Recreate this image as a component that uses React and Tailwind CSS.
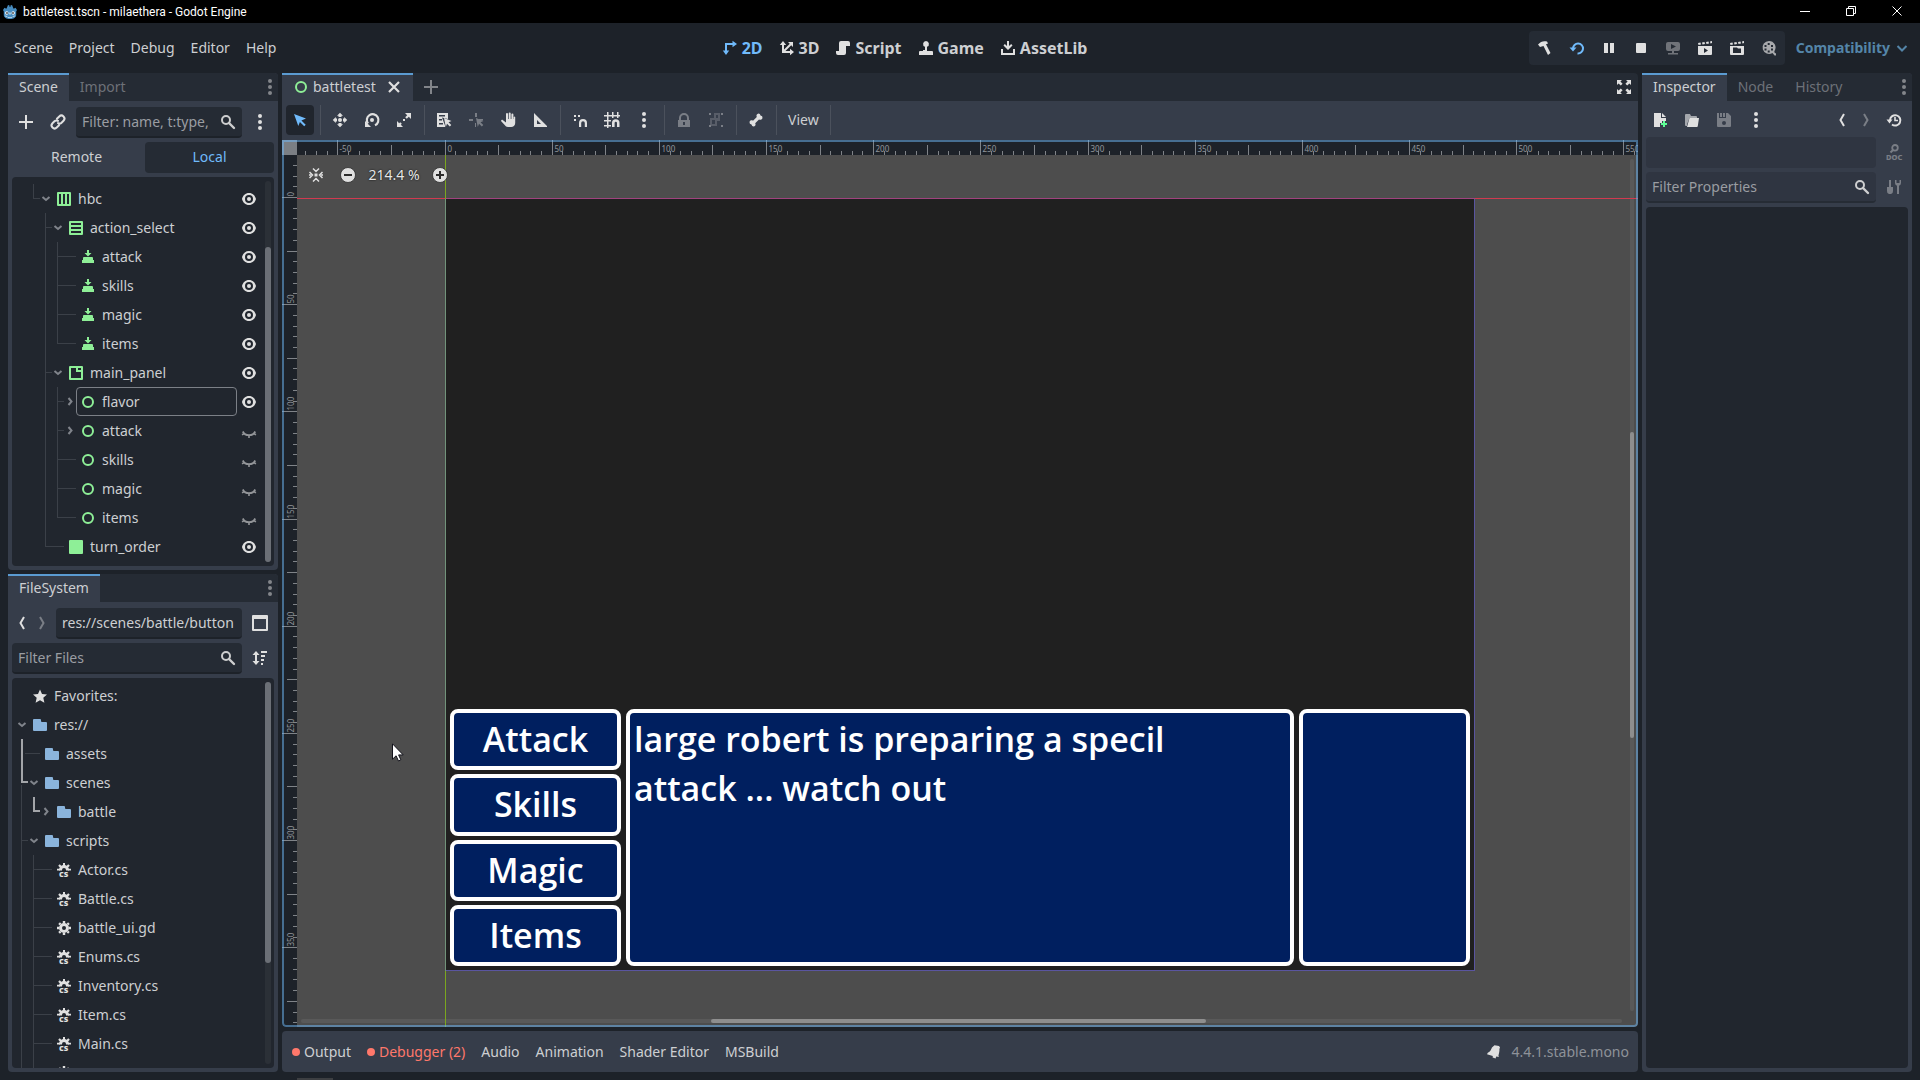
import { clsx } from 'clsx'

const ZOOM = 2.1435

/* ---------- icons, 16x16 grid ---------- */

const Ico = ({ children, className }) => (
    <svg viewBox="0 0 16 16" className={clsx('w-4 h-4 shrink-0 overflow-visible fill-[#e0e0e0]', className)} aria-hidden="true">
        {children}
    </svg>
)

const Stroke = ({ d, w = 2, color = '#e0e0e0', ...rest }) => (
    <path d={d} fill="none" stroke={color} strokeWidth={w} {...rest} />
)

const DotsIcon = ({ className }) => (
    <Ico className={className}>
        <circle cx="8" cy="2" r="2" /><circle cx="8" cy="8" r="2" /><circle cx="8" cy="14" r="2" />
    </Ico>
)
const SearchIcon = ({ className }) => (
    <Ico className={className}>
        <circle cx="6" cy="6" r="4" fill="none" stroke="#e0e0e0" strokeWidth="2" />
        <Stroke d="M9 9l5 5" w={2.4} strokeLinecap="round" />
    </Ico>
)
const PlusIcon = ({ className }) => <Ico className={className}><path d="M7 1h2v6h6v2H9v6H7V9H1V7h6z" /></Ico>
const CloseIcon = () => <Ico><Stroke d="M3 3l10 10M13 3L3 13" w={2.2} /></Ico>
const LinkIcon = () => (
    <Ico>
        <g transform="rotate(-45 8 8)" fill="none" stroke="#e0e0e0" strokeWidth="2" strokeLinecap="round">
            <path d="M6.500 11H3.200a3 3 0 0 1 0-6H6a3 3 0 0 1 2.800 2.200M9.500 5h3.300a3 3 0 0 1 0 6H10a3 3 0 0 1-2.800-2.200" />
        </g>
    </Ico>
)
const BackIcon = () => <Ico><Stroke d="M10 2L6.500 8l3.500 6" w={2} /></Ico>
const ForwardIcon = () => <Ico className="opacity-40"><Stroke d="M6 2l3.500 6L6 14" w={2} /></Ico>

const EyeIcon = () => (
    <Ico>
        <path fillRule="evenodd" d="M8 2C4.400 2 1.800 4.600 1 8c.8 3.400 3.400 6 7 6s6.200-2.600 7-6c-.8-3.400-3.400-6-7-6zm0 2a4 4 0 1 1 0 8 4 4 0 0 1 0-8z" />
        <circle cx="8" cy="8" r="2" />
    </Ico>
)
const ClosedEyeIcon = () => (
    <Ico className="opacity-60">
        <Stroke d="M1.800 8.500C3 11 5.200 12.200 8 12.200s5-1.200 6.200-3.700" w={1.800} />
        <Stroke d="M1 11.800l2.300-1.200M15 11.800l-2.300-1.200M8 12v3" w={1.600} />
    </Ico>
)

const GREEN = '#8eef97'
const nodeIcons = {
    hbox: <path fill={GREEN} fillRule="evenodd" d="M2 1h12a1 1 0 0 1 1 1v12a1 1 0 0 1-1 1H2a1 1 0 0 1-1-1V2a1 1 0 0 1 1-1zm1 2v10h2V3zm4 0v10h2V3zm4 0v10h2V3z" />,
    vbox: <path fill={GREEN} fillRule="evenodd" d="M2 1h12a1 1 0 0 1 1 1v12a1 1 0 0 1-1 1H2a1 1 0 0 1-1-1V2a1 1 0 0 1 1-1zm1 2v2h10V3zm0 4v2h10V7zm0 4v2h10v-2z" />,
    button: <path fill={GREEN} d="M7 1h2v3h2.500L8 7.500 4.500 4H7zM4 8h8a1 1 0 0 1 1 1v2H3V9a1 1 0 0 1 1-1zm-2 3h12v3H2z" />,
    panel: <path fill={GREEN} fillRule="evenodd" d="M2 1h12a1 1 0 0 1 1 1v12a1 1 0 0 1-1 1H2a1 1 0 0 1-1-1V2a1 1 0 0 1 1-1zm1 2v10h10V7H8V3zm7 0v2h3V3z" />,
    control: <circle cx="8" cy="8" r="5" fill="none" stroke={GREEN} strokeWidth="2" />,
    rect: <rect x="1" y="1" width="14" height="14" rx="1" fill={GREEN} />,
    folder: <path fill="#8ab4dc" d="M2 2a1 1 0 0 0-1 1v10a1 1 0 0 0 1 1h12a1 1 0 0 0 1-1V6a1 1 0 0 0-1-1h-4a1 1 0 0 1-1-1V3a1 1 0 0 0-1-1z" />,
    star: <path d="M8 1.500l2 4.500 5 .5-3.700 3.300 1.100 5L8 12.300l-4.400 2.500 1.100-5L1 6.500 6 6z" />,
    gear: (
        <>
            <circle cx="8" cy="8" r="3.500" fill="none" stroke="#e0e0e0" strokeWidth="3" />
            <Stroke d="M8 1v2M8 13v2M1 8h2M13 8h2M3.100 3.100l1.400 1.400M11.500 11.500l1.400 1.400M3.100 12.900l1.400-1.400M11.500 4.500l1.400-1.400" w={2.400} />
        </>
    ),
    cs: (
        <>
            <path d="M3 8.500V8a5 5 0 0 1 10 0v.5h-3V8a2 2 0 0 0-4 0v.5z" />
            <path d="M7 1h2v3H7zM1 6.800h3v1.700H1zM12 6.800h3v1.700h-3zM2.200 3.800l1.600-1.600L6 4.400 4.400 6zM13.800 3.800l-1.600-1.600L10 4.400 11.600 6z" />
            <text x="3" y="15" fontSize="9" fontWeight="800" fontFamily="Noto Sans, sans-serif">cs</text>
        </>
    ),
}

/* ---------- trees ---------- */

// one 12px cell of the relationship lines in front of a row
const cellPaths = {
    '|': 'M5.500 0V29',
    t: 'M5.500 0V29M5 14.500H12',
    l: 'M5.500 0V14.500M5 14.500H12',
    '-': 'M0 14.500H12',
}
function Cell({ kind }) {
    if (kind === 'v' || kind === '>') {
        return (
            <svg viewBox="0 0 12 29" className="w-3 h-[29px] shrink-0" aria-hidden="true">
                <path d={kind === 'v' ? 'M2.500 13l3.500 3 3.500-3' : 'M4.500 11l3 3.500-3 3.500'} fill="none" stroke="#80848b" strokeWidth="2" />
            </svg>
        )
    }
    return (
        <svg viewBox="0 0 12 29" className="w-3 h-[29px] shrink-0" shapeRendering="crispEdges" aria-hidden="true">
            {cellPaths[kind] && <path d={cellPaths[kind]} fill="none" stroke="#3b4048" />}
            {kind === 'T' && <path d="M6 0V29" fill="none" stroke="#a3a5a9" strokeWidth="2" />}
            {kind === 'T' && <path d="M9 14.500h3" fill="none" stroke="#3b4048" />}
            {kind === 'L' && <path d="M6 0V14h6" fill="none" stroke="#a3a5a9" strokeWidth="2" />}
            {kind === 'M' && <path d="M6 0V14h6" fill="none" stroke="#a3a5a9" strokeWidth="2" />}
            {kind === 'M' && <path d="M5.500 17V29" fill="none" stroke="#3b4048" />}
        </svg>
    )
}

const sceneRows = [
    { cells: ' lv', icon: 'hbox', name: 'hbc', eye: true },
    { cells: '  tv', icon: 'vbox', name: 'action_select', eye: true },
    { cells: '  |t-', icon: 'button', name: 'attack', eye: true },
    { cells: '  |t-', icon: 'button', name: 'skills', eye: true },
    { cells: '  |t-', icon: 'button', name: 'magic', eye: true },
    { cells: '  |l-', icon: 'button', name: 'items', eye: true },
    { cells: '  tv', icon: 'panel', name: 'main_panel', eye: true },
    { cells: '  |t>', icon: 'control', name: 'flavor', eye: true, focused: true },
    { cells: '  |t>', icon: 'control', name: 'attack', eye: false },
    { cells: '  |t-', icon: 'control', name: 'skills', eye: false },
    { cells: '  |t-', icon: 'control', name: 'magic', eye: false },
    { cells: '  |l-', icon: 'control', name: 'items', eye: false },
    { cells: '  l-', icon: 'rect', name: 'turn_order', eye: true },
]

const fileRows = [
    { cells: ' ', icon: 'star', name: 'Favorites:' },
    { cells: 'v', icon: 'folder', name: 'res://' },
    { cells: 'T-', icon: 'folder', name: 'assets' },
    { cells: 'Mv', icon: 'folder', name: 'scenes' },
    { cells: '|L>', icon: 'folder', name: 'battle' },
    { cells: 'tv', icon: 'folder', name: 'scripts' },
    { cells: '|t-', icon: 'cs', name: 'Actor.cs' },
    { cells: '|t-', icon: 'cs', name: 'Battle.cs' },
    { cells: '|t-', icon: 'gear', name: 'battle_ui.gd' },
    { cells: '|t-', icon: 'cs', name: 'Enums.cs' },
    { cells: '|t-', icon: 'cs', name: 'Inventory.cs' },
    { cells: '|t-', icon: 'cs', name: 'Item.cs' },
    { cells: '|t-', icon: 'cs', name: 'Main.cs' },
    { cells: '|t-', icon: 'gear', name: '' },
]

function TreeRow({ cells, icon, name, eye, focused }) {
    return (
        <li className="flex items-center h-[29px] shrink-0">
            {cells.split('').map((kind, i) => <Cell key={i} kind={kind} />)}
            <div className={clsx('flex-1 h-full flex items-center gap-1.5 pl-1 rounded-sm', focused && 'outline outline-1 -outline-offset-1 outline-[#7c8087]')}>
                <Ico>{nodeIcons[icon]}</Ico>
                <span>{name}</span>
            </div>
            {eye !== undefined && (
                <button className="ml-1" aria-label={`Toggle visibility of ${name}`}>
                    {eye ? <EyeIcon /> : <ClosedEyeIcon />}
                </button>
            )}
        </li>
    )
}

function Tree({ rows, className, thumb }) {
    return (
        <div className="flex-1 min-h-0 flex bg-[#21262e] rounded-sm overflow-hidden pl-1 pr-[3px]">
            <ul className={clsx('flex-1 min-h-0 overflow-hidden', className)}>
                {rows.map((row, i) => <TreeRow key={i} {...row} />)}
            </ul>
            <div className="w-1.5 ml-2 my-1 rounded-full bg-[#2b3037] flex flex-col">
                <div className={clsx('rounded-full bg-[#6b6f76]', thumb)} />
            </div>
        </div>
    )
}

/* ---------- docks ---------- */

const activeTab = 'bg-[#363d4a] shadow-[inset_0_2px_#5b9bd1] text-[#cdcfd2]'

function DockTabs({ tabs }) {
    return (
        <div className="h-7 shrink-0 flex bg-[#252b34] rounded-t-sm text-[#6d7178]">
            {tabs.map((tab, i) => (
                <button key={tab} className={clsx('px-[11px]', i === 0 && activeTab)}>{tab}</button>
            ))}
            <button className="ml-auto" aria-label="Dock options"><DotsIcon className="opacity-50" /></button>
        </div>
    )
}

const IconButton = ({ label, children, className }) => (
    <button aria-label={label} className={clsx('w-7 h-[30px] flex items-center justify-center shrink-0 rounded-sm', className)}>{children}</button>
)

function Field({ label, placeholder, value, search, className }) {
    return (
        <div className={clsx('flex-1 min-w-0 h-[31px] flex items-center px-1.5 rounded-sm border-b-2', className || 'bg-[#252b34] border-[#1d2229]')}>
            <input aria-label={label} placeholder={placeholder} defaultValue={value} className="w-full min-w-0 bg-transparent outline-none placeholder:text-[#9a9da2]" />
            {search && <SearchIcon className="opacity-90" />}
        </div>
    )
}

function SceneDock() {
    return (
        <section className="flex-[497_1_0%] min-h-0 flex flex-col bg-[#363d4a] rounded-sm">
            <DockTabs tabs={['Scene', 'Import']} />
            <div className="flex-1 min-h-0 flex flex-col gap-1 px-1 pt-1.5 pb-1">
                <div className="flex items-start gap-1">
                    <IconButton label="Add node"><PlusIcon /></IconButton>
                    <IconButton label="Instantiate scene"><LinkIcon /></IconButton>
                    <Field label="Filter nodes" placeholder="Filter: name, t:type," search />
                    <IconButton label="Scene options"><DotsIcon /></IconButton>
                </div>
                <div className="flex gap-1 h-[31px]">
                    <button className="flex-1 pb-px">Remote</button>
                    <button className="flex-1 pb-px bg-[#252b34] rounded-sm text-[#70bafa]">Local</button>
                </div>
                <Tree rows={sceneRows} className="pt-[7px]" thumb="mt-[66px] h-[316px]" />
            </div>
        </section>
    )
}

function FileSystemDock() {
    return (
        <section className="flex-[498_1_0%] min-h-0 flex flex-col bg-[#363d4a] rounded-sm">
            <DockTabs tabs={['FileSystem']} />
            <div className="flex-1 min-h-0 flex flex-col gap-1 px-1 pt-1.5 pb-1">
                <div className="flex items-start gap-1">
                    <div className="flex items-center gap-1 w-10 h-[30px] pl-0.5">
                        <button aria-label="Back"><BackIcon /></button>
                        <button aria-label="Forward"><ForwardIcon /></button>
                    </div>
                    <Field label="Path" value="res://scenes/battle/button" />
                    <IconButton label="Split mode"><Ico><path fillRule="evenodd" d="M1 0h14a1 1 0 0 1 1 1v14a1 1 0 0 1-1 1H1a1 1 0 0 1-1-1V1a1 1 0 0 1 1-1zm1 4v10h12V4z" /></Ico></IconButton>
                </div>
                <div className="flex items-start gap-1">
                    <Field label="Filter files" placeholder="Filter Files" search />
                    <IconButton label="Sort files">
                        <Ico><path d="M4 1l3.500 4H5v6h2.500L4 15 .5 11H3V5H.5zM9 1h6v2H9zM9 5h4v2H9zM9 9h3v2H9zM9 13h2v2H9z" /></Ico>
                    </IconButton>
                </div>
                <Tree rows={fileRows} className="pt-[3px]" thumb="h-[281px]" />
            </div>
        </section>
    )
}

function InspectorDock() {
    return (
        <section className="w-[270px] shrink-0 flex flex-col bg-[#363d4a] rounded-sm">
            <DockTabs tabs={['Inspector', 'Node', 'History']} />
            <div className="flex-1 flex flex-col gap-1 px-1 pt-1 pb-1">
                <div className="flex items-center gap-1">
                    <IconButton label="New resource">
                        <Ico>
                            <path d="M2 1h7v5h5v3h-4v2H8v4H2zM10 1l4 4h-4z" />
                            <path fill="#5fff97" d="M11 9h2v2h2v2h-2v2h-2v-2H9v-2h2z" />
                        </Ico>
                    </IconButton>
                    <IconButton label="Load resource">
                        <Ico>
                            <path d="M1 3a1 1 0 0 1 1-1h4l1 2h5a1 1 0 0 1 1 1v1H5.500L3 12.500V14H2a1 1 0 0 1-1-1z" opacity=".65" />
                            <path d="M5.500 6H15l-1.200 8a1 1 0 0 1-1 1H3z" />
                        </Ico>
                    </IconButton>
                    <IconButton label="Save resource" className="opacity-40">
                        <Ico><path fillRule="evenodd" d="M1 1h2v5h7V1h2l3 3v10a1 1 0 0 1-1 1H2a1 1 0 0 1-1-1zm7 8a2 2 0 1 0 0 4 2 2 0 0 0 0-4zM4 1h2v4H4zM7 1h2v4H7z" /></Ico>
                    </IconButton>
                    <IconButton label="Resource options"><DotsIcon /></IconButton>
                    <div className="ml-auto flex items-center gap-1.5">
                        <div className="flex gap-2">
                            <button aria-label="Previous"><BackIcon /></button>
                            <button aria-label="Next"><ForwardIcon /></button>
                        </div>
                        <IconButton label="History">
                            <Ico>
                                <Stroke d="M4 8a5.200 5.200 0 1 1 2 4.500" />
                                <path d="M.5 7.500h6L3.500 11.500z" />
                                <Stroke d="M9 5v3.500h3" w={1.600} />
                            </Ico>
                        </IconButton>
                    </div>
                </div>
                <div className="flex items-start gap-1 -mt-0.5">
                    <div className="flex-1 h-[31px] rounded-sm bg-[#2f3541]" />
                    <IconButton label="Open documentation" className="opacity-40">
                        <Ico>
                            <circle cx="9" cy="3.800" r="2.800" fill="none" stroke="#e0e0e0" strokeWidth="1.800" />
                            <Stroke d="M7 6L4.500 8.500" w={2} />
                            <text x="0" y="15.500" fontSize="7.500" fontWeight="800" fontFamily="Noto Sans, sans-serif">DOC</text>
                        </Ico>
                    </IconButton>
                </div>
                <div className="flex items-start gap-1">
                    <Field label="Filter properties" placeholder="Filter Properties" search className="bg-[#2f3541] border-[#262c35]" />
                    <IconButton label="Property tools" className="opacity-40">
                        <Ico><path d="M3 1h2v7h2v4a3 3 0 0 1-2 3H3a3 3 0 0 1-2-3V8h2zM9 1v3a3 3 0 0 0 2 2.800V15h2V6.800A3 3 0 0 0 15 4V1h-1.500v3h-3V1z" /></Ico>
                    </IconButton>
                </div>
                <div className="flex-1 bg-[#21262e] rounded-sm" />
            </div>
        </section>
    )
}

/* ---------- 2D viewport ---------- */

const cursorTip = 'M8 6l7.500 3-3 1.200 2.800 2.800-1.500 1.500-2.800-2.800L9.800 15z'

const Sep = () => <div className="w-1 h-[30px] flex justify-center shrink-0"><div className="w-px bg-[#4b515c]" /></div>

function CanvasToolbar() {
    return (
        <div className="h-[39px] shrink-0 flex items-start gap-1 px-1 pt-1 bg-[#363d4a]">
            <IconButton label="Select mode" className="bg-[#20252d]"><Ico><path fill="#70bafa" d="M2 2l12 4.600-4.600 1.800 4.300 4.300-1.500 1.500-4.300-4.300L6.300 14z" /></Ico></IconButton>
            <Sep />
            <IconButton label="Move mode">
                <Ico>
                    <circle cx="8" cy="8" r="2" />
                    <path d="M8 .8l3 3H9.500V5h-3V3.800H5zM8 15.200l3-3H9.500V11h-3v1.200H5zM.8 8l3-3v1.500H5v3H3.800V11zM15.200 8l-3-3v1.500H11v3h1.200V11z" />
                </Ico>
            </IconButton>
            <IconButton label="Rotate mode">
                <Ico>
                    <Stroke d="M4 11.500A5.800 5.800 0 1 1 11 13.300" w={2.200} />
                    <circle cx="8" cy="8" r="2" />
                    <path d="M1 9v6h6z" />
                </Ico>
            </IconButton>
            <IconButton label="Scale mode">
                <Ico>
                    <path d="M9 1h6v6l-2.200-2.200-2 2-1.600-1.600 2-2zM1 9v6h6l-2.200-2.200 1-1-1.600-1.600-1 1zM7 7h2v2H7z" />
                </Ico>
            </IconButton>
            <Sep />
            <IconButton label="List select">
                <Ico>
                    <path fillRule="evenodd" d="M1 1h11v6L6 5.500l3 8V15H1zm2 2v1.500h6V3zm0 4v1.500h3V7zm0 4v1.500h4V11z" />
                    <path d={cursorTip} />
                </Ico>
            </IconButton>
            <IconButton label="Pivot" className="opacity-40">
                <Ico><path d="M7 1h2v4H7zM1 7h4v2H1zM11 7h4v1.500h-4zM7 11h1v4H7z" /><path d={cursorTip} /></Ico>
            </IconButton>
            <IconButton label="Pan mode">
                <Ico>
                    <path d="M6 2a1 1 0 0 1 2 0v5h.7V1.500a1 1 0 0 1 2 0V7h.7V2.500a1 1 0 0 1 2 0V7h.3V5a1 1 0 0 1 1.500 0v6c0 2.500-2 4-4 4H8c-1.500 0-2.500-.7-3.300-2L1.200 9.200c-.4-1.200.8-1.800 1.800-1L6 10.500z" />
                </Ico>
            </IconButton>
            <IconButton label="Ruler mode"><Ico><path fillRule="evenodd" d="M2 1l13 13v1H2zm3 7v4h4z" /></Ico></IconButton>
            <Sep />
            <IconButton label="Smart snap">
                <Ico>
                    <path d="M2 3h2v2H2zM6 3h2v2H6zM2 7h2v2H2zM7 15v-4a4 4 0 0 1 8 0v4h-2.200v-4a1.800 1.800 0 0 0-3.600 0v4z" />
                </Ico>
            </IconButton>
            <IconButton label="Grid snap">
                <Ico>
                    <path d="M3 0h1.500v3H8V0h1.500v3H13V0h1.500v3H16v1.500h-1.500V6H13V4.500H9.500V6H8V4.500H4.500V8H7v1.500H4.500V13H7v1.500H4.500V16H3v-1.500H0V13h3V9.500H0V8h3V4.500H0V3h3zM8 15v-4a3.700 3.700 0 0 1 7.500 0v4H13v-4a1.200 1.200 0 0 0-2.400 0v4z" />
                </Ico>
            </IconButton>
            <IconButton label="Snapping options"><DotsIcon /></IconButton>
            <Sep />
            <IconButton label="Lock" className="opacity-40">
                <Ico><path fillRule="evenodd" d="M8 1a5 5 0 0 0-5 5v2H2v7h12V8h-1V6a5 5 0 0 0-5-5zm0 2a3 3 0 0 1 3 3v2H5V6a3 3 0 0 1 3-3zM7 10h2v3H7z" /></Ico>
            </IconButton>
            <IconButton label="Group" className="opacity-40">
                <Ico>
                    <path d="M1 1h2v2H1zM13 1h2v2h-2zM1 13h2v2H1zM13 13h2v2h-2z" />
                    <path opacity=".5" fillRule="evenodd" d="M6 1h6v8H9v5H2V6h4zm2 2v3h2V3zM4 8v4h3V8z" />
                </Ico>
            </IconButton>
            <Sep />
            <IconButton label="Skeleton options">
                <Ico><path d="M10.500 1.500a2.300 2.300 0 0 1 2 1.900 2.300 2.300 0 0 1 2 2.600c-.4 1.700-2.200 2.200-3.500 1.400l-3.800 3.800c.9 1.500.2 3-1.300 3.300a2.300 2.300 0 0 1-2.400-1.900 2.300 2.300 0 0 1-2-2.500c.3-1.600 2-2.300 3.500-1.400l3.800-3.700c-.9-1.500.1-3.300 1.700-3.500z" /></Ico>
            </IconButton>
            <Sep />
            <button className="h-[30px] px-1.5">View</button>
            <Sep />
        </div>
    )
}

function marks(from, to, origin) {
    const list = []
    for (let unit = from; unit <= to; unit += 5) {
        list.push({ unit, pos: Math.floor(origin + unit * ZOOM) + 0.5, size: unit % 50 === 0 ? 15 : unit % 25 === 0 ? 10 : 4 })
    }
    return list
}

function Rulers() {
    return (
        <>
            <div className="bg-[#7b7f84]" />
            <svg className="w-full h-[15px] bg-[#1d2229] text-[8px] fill-[#92969b] stroke-none" aria-hidden="true">
                {marks(-65, 555, 148).map(({ unit, pos, size }) => (
                    <g key={unit}>
                        <path d={`M${pos} ${15 - size}V15`} stroke="#7f8388" />
                        {size === 15 && <text x={pos + 2} y="12">{unit}</text>}
                    </g>
                ))}
            </svg>
            <svg className="w-[15px] h-full bg-[#1d2229] text-[8px] fill-[#92969b] stroke-none" aria-hidden="true">
                {marks(-20, 385, 42.5).map(({ unit, pos, size }) => (
                    <g key={unit}>
                        <path d={`M${15 - size} ${pos}H15`} stroke="#7f8388" />
                        {size === 15 && <text transform={`translate(12 ${pos - 1}) rotate(-90)`}>{unit}</text>}
                    </g>
                ))}
            </svg>
        </>
    )
}

const gamePanel = 'bg-[#001f5f] border-4 border-white rounded-lg'

function GameFrame() {
    return (
        <div className="absolute left-[148px] top-[43px] w-[1030px] h-[773px] flex flex-col justify-end p-1 bg-[#202020] border-r border-b border-[#5a55a0] font-['Open_Sans',sans-serif] font-semibold text-[34px] leading-[49px] text-white">
            <div className="h-[257px] flex gap-[5px] pl-px">
                <div className="w-[171px] flex flex-col gap-1">
                    {['Attack', 'Skills', 'Magic', 'Items'].map(name => (
                        <button key={name} className={clsx('flex-1 min-h-0 flex items-center justify-center', gamePanel)}>{name}</button>
                    ))}
                </div>
                <div className={clsx('flex-1 px-1 pt-0.5', gamePanel)}>
                    <p>large robert is preparing a specil<br />attack ... watch out</p>
                </div>
                <div className={clsx('w-[171px]', gamePanel)} />
            </div>
        </div>
    )
}

function Viewport() {
    return (
        <div className="relative flex-1 min-h-0 grid grid-cols-[15px_1fr] grid-rows-[15px_1fr] overflow-hidden rounded-b-sm">
            <Rulers />
            <div className="relative overflow-hidden bg-[#4d4d4d]">
                <GameFrame />

                <div className="absolute right-1 top-1 bottom-4 w-1 rounded-full bg-[#595959]">
                    <div className="absolute inset-x-0 top-[32%] h-[36%] rounded-full bg-[#8e8e8e]" />
                </div>
                <div className="absolute left-1 right-4 bottom-1 h-1 rounded-full bg-[#595959]">
                    <div className="absolute inset-y-0 left-[31%] w-[37.5%] rounded-full bg-[#8e8e8e]" />
                </div>

                <div className="absolute inset-x-0 top-[43px] h-px bg-[#d13a50]" />
                <div className="absolute left-[148px] top-[43px] w-[1030px] h-px bg-[#a0437f]" />
                <div className="absolute inset-y-0 left-[148px] w-px bg-[#7ba61f]" />
                <div className="absolute left-[148px] top-[44px] h-[772px] w-px bg-[#71937a]" />

                <div className="absolute left-[11px] top-1.5 h-7 flex items-center text-[#e6e6e6]">
                    <button aria-label="Center view" className="mr-4">
                        <Ico>
                            <path d="M6.500 6.500h3v3h-3zM1 7.200h2.500v1.600H1zM12.500 7.200H15v1.600h-2.500z" />
                            <Stroke d="M5 1.500l3 3 3-3M5 14.500l3-3 3 3M1.500 5l3 3-3 3M14.500 5l-3 3 3 3" w={1.500} />
                        </Ico>
                    </button>
                    <button aria-label="Zoom out">
                        <Ico><circle cx="8" cy="8" r="7.500" stroke="#2b2b2b" strokeWidth=".8" /><path fill="#2b2b2b" d="M4 7h8v2H4z" /></Ico>
                    </button>
                    <button className="w-[76px] text-center [text-shadow:0_0_2px_#000]">214.4 %</button>
                    <button aria-label="Zoom in">
                        <Ico><circle cx="8" cy="8" r="7.500" stroke="#2b2b2b" strokeWidth=".8" /><path fill="#2b2b2b" d="M7 4h2v3h3v2H9v3H7V9H4V7h3z" /></Ico>
                    </button>
                </div>

                <svg viewBox="0 0 12 19" className="absolute left-[95px] top-[588px] w-3 h-[19px]" aria-hidden="true">
                    <path d="M.5.8v15.400l3.600-3.400 2.400 5.200 2.400-1.100-2.300-5h4.600z" fill="#fff" stroke="#14141c" />
                </svg>
            </div>
            <div className="absolute inset-0 border-2 border-[#70bafa]/50 rounded-b-sm pointer-events-none" />
        </div>
    )
}

function BottomPanel() {
    return (
        <div className="h-[41px] shrink-0 flex items-center gap-4 pl-[10px] pr-[9px] bg-[#363d4a] rounded-sm">
            <button className="flex items-center gap-1"><span className="w-2 h-2 rounded-full bg-[#ff786b]" />Output</button>
            <button className="flex items-center gap-1 text-[#ff786b]"><span className="w-2 h-2 rounded-full bg-[#ff786b]" />Debugger (2)</button>
            {['Audio', 'Animation', 'Shader Editor', 'MSBuild'].map(name => <button key={name}>{name}</button>)}
            <div className="ml-auto flex items-center gap-2.5 text-[#8e9299]">
                <button aria-label="Notifications">
                    <Ico><path d="M8.500 1.200L13 2l1 1.500-.6 1.500c.3 2.500-.6 4.500-1 7l.6 1-2.800-.6-.6 2.200-3-1 .2-1.700L1 10.200l.8-1.400C4.500 7.500 5 5.500 6 3.500z" /></Ico>
                </button>
                <span>4.4.1.stable.mono</span>
            </div>
        </div>
    )
}

/* ---------- top bars ---------- */

function TitleBar() {
    return (
        <header className="h-[23px] shrink-0 flex items-center bg-black text-white pl-0.5 font-[Roboto,sans-serif] text-[12px]">
            <svg viewBox="0 0 16 16" className="w-4 h-4 mr-[5px]" aria-hidden="true">
                <path fill="#478cbf" d="M1 6l1.500-2.300 1.800 1L5 3.500 6 1l1.500.5.1 1.500h.8l.1-1.500L10 1l1 2.500.7 1.200 1.800-1L15 6l-.8 1.500V11c0 2.500-2.700 4-6.200 4s-6.200-1.500-6.200-4V7.500z" />
                <circle cx="4.800" cy="9" r="1.700" fill="#fff" /><circle cx="11.200" cy="9" r="1.700" fill="#fff" />
                <circle cx="5" cy="9" r=".9" fill="#414042" /><circle cx="11" cy="9" r=".9" fill="#414042" />
                <path d="M7.500 8.500h1v2h-1z" fill="#fff" />
                <path d="M3 12l2 .5 1 1 4-.1 1-1 2-.4" fill="none" stroke="#dfe9f2" strokeWidth=".7" />
            </svg>
            <span>battletest.tscn - milaethera - Godot Engine</span>
            <div className="ml-auto flex items-center pb-0.5">
                {[
                    ['Minimize', 'M0 5.500h10'],
                    ['Restore', 'M.5 2.500h7v7h-7zM2.500 2.500v-2h7v7h-2'],
                    ['Close', 'M.5.5l9 9M9.500.5l-9 9'],
                ].map(([label, d]) => (
                    <button key={label} aria-label={label} className="w-[46px] flex justify-center">
                        <svg viewBox="0 0 10 10" className="w-2.5 h-2.5"><path d={d} fill="none" stroke="#fff" /></svg>
                    </button>
                ))}
            </div>
        </header>
    )
}

const workspaces = [
    ['2D', <><Stroke d="M4 11V4h7" color="#70bafa" /><path fill="#70bafa" d="M.8 10.500h6.400L4 15zM10.500.8v6.400L15 4z" /></>],
    ['3D', <><Stroke d="M4 4v8h8M4 12l8-8" /><path d="M.8 5h6.400L4 1zM11 8.800v6.400L15 12zM9 2h5v5z" /></>],
    ['Script', <path d="M6 1a2 2 0 0 0-2 2v8H1v2a2 2 0 0 0 2 2h6a2 2 0 0 0 2-2V6h4V3a2 2 0 0 0-2-2z" />],
    ['Game', <path d="M8 1a3 3 0 0 0-1 5.800V10H5v1H2a1 1 0 0 0-1 1v3h14v-3a1 1 0 0 0-1-1H9V6.800A3 3 0 0 0 8 1z" />],
    ['AssetLib', <><path d="M7 1h2v5l2.200-2 1.300 1.400L8 10 3.500 5.400 4.800 4 7 6z" /><Stroke d="M2 9v5h12V9" /></>],
]

const clapper = 'M1 3l2.500-.5.5 2L1.500 5zM5 2.500L7.500 2l.5 2-2.500.5zM9 2l2.500-.5.5 2-2.500.5zM13 1.500L15 1v2l-1.500.5z'

const runButtons = [
    ['Build project', <path d="M1 4.500C3.500 1.500 6.500.5 10 1.500l1 2-2 .8 4.500 8.700-2.500 2L6.500 6 3 7z" />],
    ['Reload', <><Stroke d="M4 8.500a5 5 0 1 1 4.500 5" color="#70bafa" /><path fill="#70bafa" d="M.5 7.500h7L4 11.500z" /></>],
    ['Pause', <path d="M3 3h4v10H3zM9 3h4v10H9z" />],
    ['Stop', <rect x="3" y="3" width="10" height="10" rx="1" />],
    ['Remote deploy', <path opacity=".4" fillRule="evenodd" d="M3 2h10a2 2 0 0 1 2 2v5a2 2 0 0 1-2 2H9v2h4v1.500H3V13h4v-2H3a2 2 0 0 1-2-2V4a2 2 0 0 1 2-2zm3 2v5l5-2.500z" />],
    ['Play scene', <><path fillRule="evenodd" d="M1 6h14v8a1 1 0 0 1-1 1H2a1 1 0 0 1-1-1zm6 2v5l4-2.500z" /><path d={clapper} /></>],
    ['Play custom scene', <><path fillRule="evenodd" d="M1 6h14v8a1 1 0 0 1-1 1H2a1 1 0 0 1-1-1zm3 1.500V13h8V8.500H9l-1-1z" /><path d={clapper} /></>],
    ['Movie maker', <path opacity=".7" fillRule="evenodd" d="M8 1a6.500 6.500 0 1 0 3.500 12l2 2.500h1.500v-2c-1.500-.5-2-1.500-1.500-2.500A6.500 6.500 0 0 0 8 1zM6.700 3h2v2h-2zM3.500 5h2v2h-2zM10 5h2v2h-2zM3.500 8.500h2v2h-2zM10 8.500h2v2h-2zM6.700 10.500h2v2h-2z" />],
]

function MenuBar() {
    return (
        <div className="h-[50px] shrink-0 flex items-center justify-between pl-[14px] pr-2.5">
            <nav className="flex gap-4 pr-1">
                {['Scene', 'Project', 'Debug', 'Editor', 'Help'].map(name => <button key={name}>{name}</button>)}
            </nav>
            <div className="flex gap-4 font-bold text-[16px]">
                {workspaces.map(([name, shape]) => (
                    <button key={name} className={clsx('flex items-center gap-1', name === '2D' && 'text-[#70bafa]')}>
                        <Ico>{shape}</Ico>{name}
                    </button>
                ))}
            </div>
            <div className="flex items-center gap-[11px]">
                <div className="h-[34px] flex items-center gap-4 px-2 bg-[#252b34] rounded-sm">
                    {runButtons.map(([label, shape]) => (
                        <button key={label} aria-label={label}><Ico>{shape}</Ico></button>
                    ))}
                </div>
                <button className="flex items-center gap-1 font-bold text-[#5485a8]">
                    Compatibility
                    <Ico><Stroke d="M3.500 6L8 10.500 12.500 6" color="#5485a8" /></Ico>
                </button>
            </div>
        </div>
    )
}

export default function App() {
    return (
        <div className="h-screen flex flex-col overflow-hidden bg-[#1d2229] text-[#cdcfd2] text-[14px] leading-5 font-['Noto_Sans',sans-serif]">
            <TitleBar />
            <MenuBar />
            <main className="flex-1 min-h-0 flex gap-1 px-2">
                <aside className="w-[270px] shrink-0 flex flex-col gap-1">
                    <SceneDock />
                    <FileSystemDock />
                </aside>
                <div className="flex-1 min-w-0 flex flex-col">
                    <div className="h-7 shrink-0 flex items-center bg-[#252b34] rounded-t-sm">
                        <div className={clsx('h-full flex items-center gap-2.5 px-[11px]', activeTab)}>
                            <button className="flex items-center gap-1"><Ico>{nodeIcons.control}</Ico>battletest</button>
                            <button aria-label="Close tab"><CloseIcon /></button>
                        </div>
                        <button aria-label="New tab" className="ml-2.5"><PlusIcon className="opacity-50" /></button>
                        <button aria-label="Distraction free mode" className="ml-auto mr-1.5">
                            <Ico><path d="M1 1h5L4.400 2.600 6.600 4.800 4.800 6.600 2.600 4.400 1 6zM15 1v5l-1.600-1.600-2.200 2.200-1.800-1.800 2.200-2.200L10 1zM1 15v-5l1.600 1.600 2.200-2.200 1.800 1.800-2.200 2.200L6 15zM15 15h-5l1.600-1.600-2.200-2.200 1.800-1.800 2.200 2.200L15 10z" /></Ico>
                        </button>
                    </div>
                    <CanvasToolbar />
                    <Viewport />
                    <div className="h-1 shrink-0" />
                    <BottomPanel />
                </div>
                <InspectorDock />
            </main>
            <footer className="h-2 shrink-0 flex items-end pl-[297px]"><div className="w-9 h-0.5 bg-[#3d3f42]" /></footer>
        </div>
    )
}
